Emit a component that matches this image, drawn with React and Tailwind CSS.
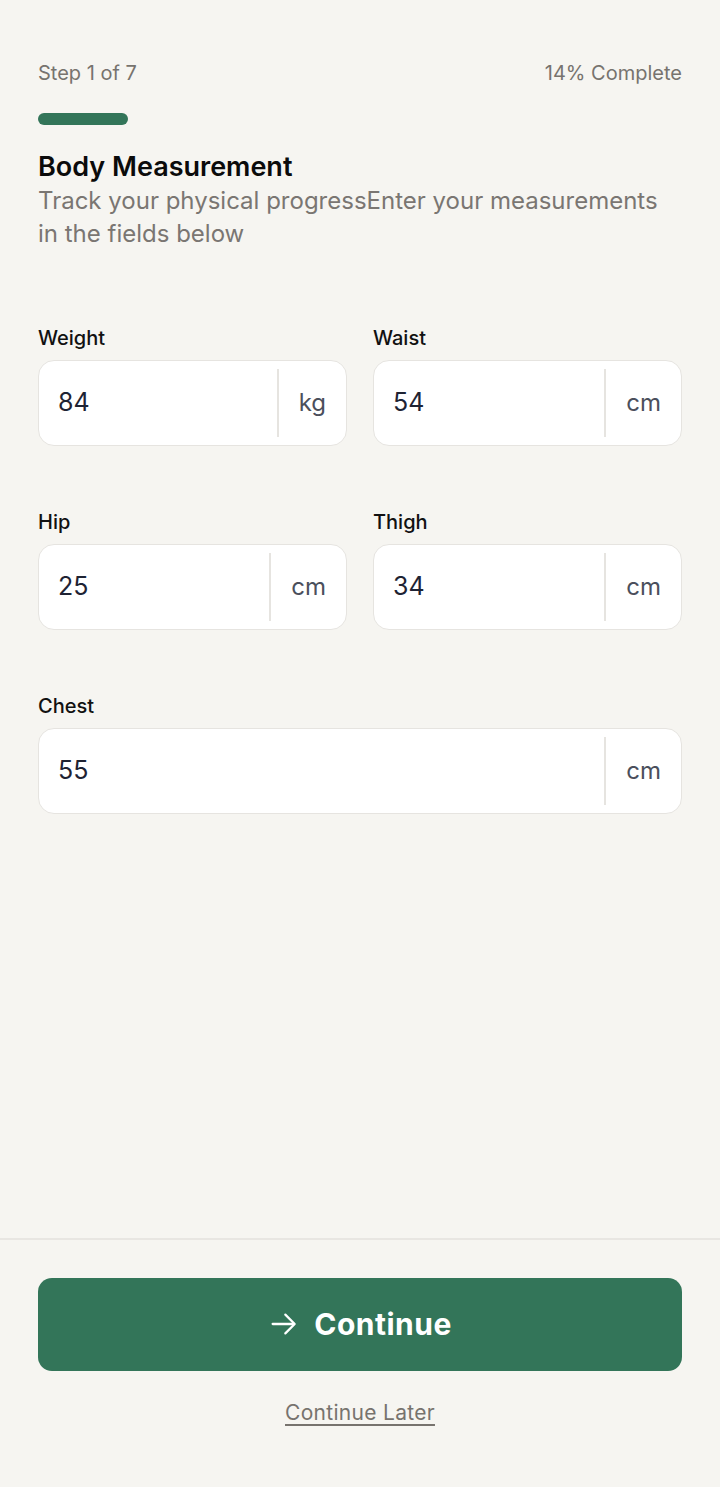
import React, { useState } from 'react';

const fields = [
  { id: 'weight', label: 'Weight', value: '84', unit: 'kg' },
  { id: 'waist', label: 'Waist', value: '54', unit: 'cm' },
  { id: 'hip', label: 'Hip', value: '25', unit: 'cm' },
  { id: 'thigh', label: 'Thigh', value: '34', unit: 'cm' },
  { id: 'chest', label: 'Chest', value: '55', unit: 'cm', full: true },
];

const ArrowRight = () => (
  <svg width="32" height="32" viewBox="0 0 24 24" fill="none" stroke="currentColor" strokeWidth="1.7" strokeLinecap="round" strokeLinejoin="round">
    <path d="M3.5 12h16" />
    <path d="M13 5l7 7-7 7" />
  </svg>
);

const MeasureField = ({ field, onChange }) => (
  <div className={field.full ? 'col-span-2' : ''}>
    <label htmlFor={field.id} className="block text-[20px] leading-[24px] font-[450] text-[#111111] mb-[10px]">
      {field.label}
    </label>
    <div className="flex h-[86px] bg-white border border-[#e6e4e0] rounded-[16px]">
      <input
        id={field.id}
        value={field.value}
        onChange={(e) => onChange(field.id, e.target.value)}
        className="flex-1 min-w-0 bg-transparent pl-[19px] text-[25px] text-[#1e2333] outline-none"
      />
      <div className="my-[8px] border-l-2 border-[#e6e4e0] px-5 flex items-center text-[24px] text-[#4b4f5c]">
        {field.unit}
      </div>
    </div>
  </div>
);

export default function App() {
  const [values, setValues] = useState(fields);

  const handleChange = (id, value) => {
    setValues((prev) => prev.map((f) => (f.id === id ? { ...f, value } : f)));
  };

  return (
    <div className="flex flex-col h-[1487px] bg-[#f6f5f1]" style={{ fontFamily: 'Inter, "Noto Sans", sans-serif' }}>
      <main className="flex-1 px-[38px] pt-[58px]">
        <div className="flex items-center justify-between text-[20px] text-[#77736e]">
          <span>Step 1 of 7</span>
          <span>14% Complete</span>
        </div>
        <div className="mt-[25px] h-[12px] rounded-full">
          <div className="h-full w-[14%] rounded-full bg-[#337559]" />
        </div>

        <h1 className="mt-[25px] text-[27px] leading-[34px] font-semibold text-[#0b0b0b]">Body Measurement</h1>
        <p className="text-[24px] leading-[33px] text-[#7a7672]">
          Track your physical progressEnter your measurements in the fields below
        </p>

        <div className="mt-[76px] grid grid-cols-2 gap-x-[26px] gap-y-[64px]">
          {values.map((f) => (
            <MeasureField key={f.id} field={f} onChange={handleChange} />
          ))}
        </div>
      </main>

      <footer className="border-t-2 border-[#e8e6e2] px-[38px] pt-[38px] pb-[59px]">
        <button className="w-full h-[93px] rounded-[14px] bg-[#337559] text-white flex items-center justify-center gap-[14px]">
          <ArrowRight />
          <span className="text-[30px] font-bold tracking-[0.5px]">Continue</span>
        </button>
        <div className="mt-[26px] text-center">
          <a href="#" className="text-[21px] text-[#77736e] underline underline-offset-4 tracking-[0.3px]">Continue Later</a>
        </div>
      </footer>
    </div>
  );
}
